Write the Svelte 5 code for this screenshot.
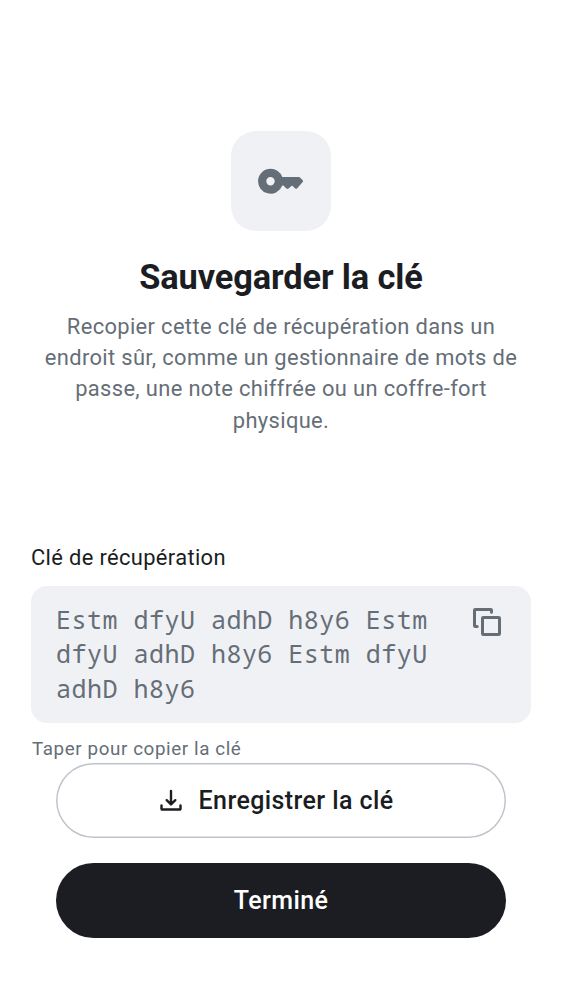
<script>
  const key = 'Estm dfyU adhD h8y6 Estm dfyU adhD h8y6 Estm dfyU adhD h8y6';
</script>

<main>
  <header>
    <div class="badge">
      <svg class="key" viewBox="0 0 46 26" fill="currentColor"><path fill-rule="evenodd" d="M12.500 .7a12.500 12.500 0 0 1 11.800 8.300H40.600q.8 0 1.400.6l2.500 2.500q1.100 1.100 0 2.200l-5.300 5.900q-1.100 1-2.200 0l-3-2.700-3.500 3q-1 .8-2 0l-3.200-3H24.300A12.500 12.500 0 1 1 12.500 .7ZM12.500 9a4.200 4.200 0 1 0 0 8.400a4.200 4.200 0 0 0 0-8.400Z"/></svg>
    </div>
    <h1>Sauvegarder la clé</h1>
    <p>Recopier cette clé de récupération dans un<br />endroit sûr, comme un gestionnaire de mots de<br />passe, une note chiffrée ou un coffre-fort<br />physique.</p>
  </header>

  <section>
    <h2>Clé de récupération</h2>
    <div class="box">
      <code>{key}</code>
      <svg class="copy" viewBox="0 0 30 30" fill="none" stroke="currentColor" stroke-width="3" stroke-linecap="round" stroke-linejoin="round"><rect x="10.500" y="10.500" width="17" height="17" rx=".8"/><path d="M5.200 19.500H3.300a.8.8 0 0 1-.8-.8V3.300a.8.8 0 0 1 .8-.8H18.700a.8.8 0 0 1 .8.8V5.200"/></svg>
    </div>
    <small>Taper pour copier la clé</small>
  </section>

  <footer>
    <button class="outline">
      <svg class="save" viewBox="0 0 24 24" fill="none" stroke="currentColor" stroke-width="2.400" stroke-linecap="round" stroke-linejoin="round"><path d="M12 3V16M7.700 12.200L12 16.500L16.300 12.200M2.500 17.500V20.800a.7.7 0 0 0 .7.7H20.800a.7.7 0 0 0 .7-.7V17.500"/></svg>
      <span>Enregistrer la clé</span>
    </button>
    <button class="solid"><span>Terminé</span></button>
  </footer>
</main>

<style>
  :global(body) { margin: 0; background: #fff; }
  main { box-sizing: border-box; width: 562px; height: 1000px; padding: 131px 31px 0; font-family: Roboto, sans-serif; color: #1b1d22; overflow: hidden; }
  header { height: 411px; display: flex; flex-direction: column; align-items: center; text-align: center; }
  .badge { width: 100px; height: 100px; border-radius: 25px; background: #f0f1f5; display: flex; align-items: center; justify-content: center; color: #656e77; }
  .key { width: 46px; height: 26px; }
  h1 { margin: 25px 0 0; font: 700 34.400px/42px Roboto, sans-serif; letter-spacing: -.12px; white-space: nowrap; }
  p { margin: 13px 0 0; font-size: 21.900px; line-height: 31.200px; letter-spacing: .35px; color: #656e77; white-space: nowrap; }
  h2 { margin: 0; font-size: 21.900px; font-weight: 400; line-height: 31px; letter-spacing: .35px; }
  .box { box-sizing: border-box; margin-top: 13px; height: 137px; padding: 16px 29px 0 25px; border-radius: 16px; background: #f0f1f5; color: #656e77; display: flex; justify-content: space-between; }
  code { width: 390px; font: 25px/34.300px "Noto Sans Mono", "DejaVu Sans Mono", monospace; letter-spacing: .49px; }
  .copy { width: 30px; height: 30px; margin-top: 5px; }
  small { display: block; margin: 14px 0 0 1px; font-size: 18.800px; line-height: 24px; letter-spacing: .6px; color: #656e77; }
  footer { display: flex; flex-direction: column; gap: 25px; padding: 1.500px 25px 0; }
  button { box-sizing: border-box; height: 75px; padding: 1px 0 0; border: 0; border-radius: 38px; display: flex; align-items: center; justify-content: center; font: 500 25px/34px Roboto, sans-serif; letter-spacing: .4px; }
  .outline { gap: 16px; padding-right: 10px; box-shadow: inset 0 0 0 1.500px #bec4cc; background: #fff; color: #1b1d22; }
  .save { width: 24px; height: 24px; margin-top: -2px; }
  .solid { background: #1b1d22; color: #fff; }
</style>
